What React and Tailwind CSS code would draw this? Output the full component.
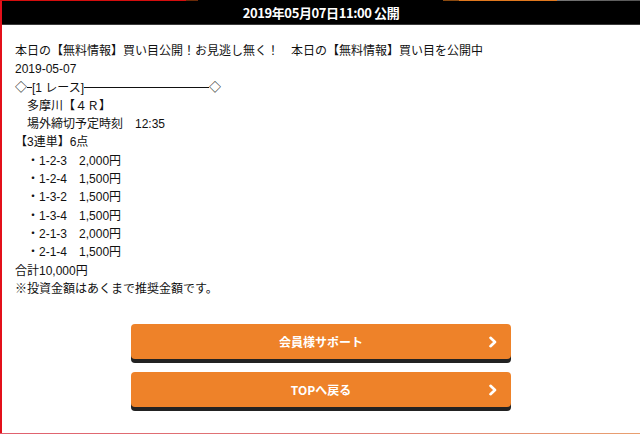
export default function App() {
  const items = [
    ["1-2-3", "2,000円"],
    ["1-2-4", "1,500円"],
    ["1-3-2", "1,500円"],
    ["1-3-4", "1,500円"],
    ["2-1-3", "2,000円"],
    ["2-1-4", "1,500円"],
  ];
  const font = { fontFamily: '"Liberation Sans", "Noto Sans CJK JP", sans-serif' };
  const Chevron = () => (
    <svg width="10" height="12" viewBox="0 0 10 12" className="absolute right-[13px] top-1/2 -translate-y-1/2">
      <polyline points="2.5,1.8 7,6 2.5,10.2" fill="none" stroke="white" strokeWidth="2.6" strokeLinecap="round" strokeLinejoin="round" />
    </svg>
  );
  const Button = ({ label }) => (
    <div className="relative w-[380px] h-[35px] rounded-[4px] bg-[#ee8229] shadow-[0_4px_0_#222222] flex items-center justify-center text-white font-bold text-[12px]">
      <span style={{ fontFamily: '"Noto Sans CJK JP", sans-serif' }}>{label}</span>
      <Chevron />
    </div>
  );
  return (
    <div className="w-[640px] h-[434px] bg-white flex flex-col overflow-hidden" style={font}>
      <div className="flex h-px shrink-0">
        <div className="w-[186px] bg-[#d40d0d]" />
        <div className="w-[12px] bg-[#6a2a08]" />
        <div className="w-[245px] bg-black" />
        <div className="w-[16px] bg-[#8a4a10]" />
        <div className="w-[98px] bg-[#e0781e]" />
        <div className="flex-1 bg-gradient-to-r from-[#777777] to-[#555555]" />
      </div>
      <div className="flex-1 flex flex-col border-l-2 border-[#e3101a]">
        <div className="h-[23px] bg-black flex items-center justify-center shrink-0">
          <span
            className="text-white font-bold text-[13px] tracking-[-0.4px] [text-shadow:0_0_1px_#000]"
            style={{ fontFamily: '"Noto Sans CJK JP", sans-serif' }}
          >
            2019年05月07日11:00 公開
          </span>
        </div>
        <div className="h-px bg-[#3a3a3a] shrink-0" />
        <div className="pl-[13px] pt-[17px] text-[12px] leading-[18.3px] text-[#111]">
          <div>本日の【無料情報】買い目公開！お見逃し無く！　本日の【無料情報】買い目を公開中</div>
          <div>2019-05-07</div>
          <div className="flex items-center">
            <span>◇</span>
            <span className="w-[5px] h-px bg-[#111]" />
            <span>[1 レース]</span>
            <span className="w-[125px] h-px bg-[#111]" />
            <span>◇</span>
          </div>
          <div>　多摩川【４Ｒ】</div>
          <div>　場外締切予定時刻　12:35</div>
          <div>【3連単】6点</div>
          {items.map(([a, b]) => (
            <div key={a}>　・{a}　{b}</div>
          ))}
          <div>合計10,000円</div>
          <div>※投資金額はあくまで推奨金額です。</div>
        </div>
        <div className="flex flex-col items-center gap-[13px] mt-[26px]">
          <Button label="会員様サポート" />
          <Button label="TOPへ戻る" />
        </div>
        <div className="flex-1" />
      </div>
      <div className="h-px shrink-0 bg-gradient-to-r from-[#e0606e] via-[#e07a78] to-[#e8a070]" />
    </div>
  );
}
